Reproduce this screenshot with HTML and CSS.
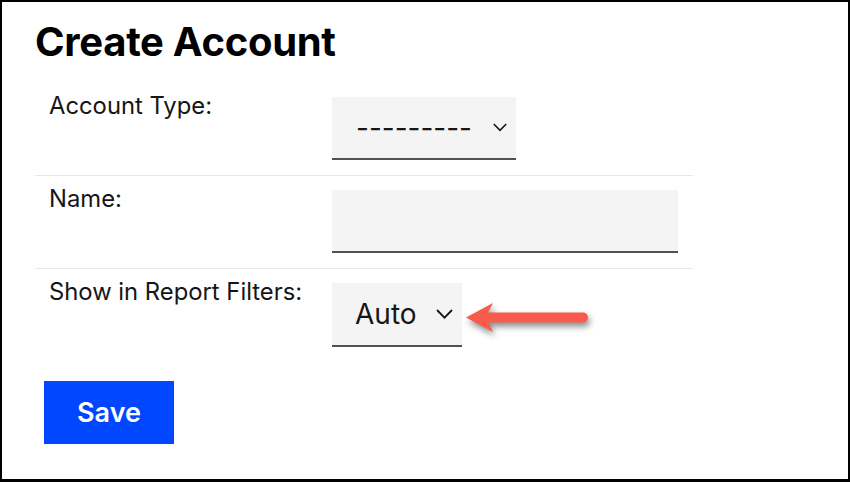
FILE: index.html
```html
<!DOCTYPE html>
<html lang="en">
<head>
<meta charset="utf-8">
<title>Create Account</title>
<link rel="stylesheet" href="styles.css">
</head>
<body>
<div class="frame">
  <h1 class="title">Create Account</h1>
  <div class="form">
    <div class="row row-sep">
      <div class="label">Account Type:</div>
      <div class="field">
        <div class="select select-type">
          <span class="select-text">---------</span>
          <svg class="chev" width="14" height="9" viewBox="0 0 14 9"><path d="M0.8 1 L7 7.4 L13.2 1" fill="none" stroke="#161616" stroke-width="1.6"/></svg>
        </div>
      </div>
    </div>
    <div class="row row-sep">
      <div class="label">Name:</div>
      <div class="field">
        <div class="input-name"></div>
      </div>
    </div>
    <div class="row">
      <div class="label">Show in Report Filters:</div>
      <div class="field">
        <div class="select-wrap">
          <div class="select select-auto">
            <span class="select-text">Auto</span>
            <svg class="chev" width="17" height="10" viewBox="0 0 17 10"><path d="M1 1 L8.5 8.6 L16 1" fill="none" stroke="#161616" stroke-width="1.8"/></svg>
          </div>
          <svg class="arrow" width="135" height="45" viewBox="0 0 135 45">
            <g class="arrow-g">
              <line x1="26" y1="22.5" x2="123" y2="22.5" stroke="#f85a4c" stroke-width="10" stroke-linecap="round"/>
              <polygon points="6,22.5 33,8 28,18 28,27 33,37" fill="#f85a4c"/>
            </g>
          </svg>
        </div>
      </div>
    </div>
  </div>
  <button class="save">Save</button>
</div>
</body>
</html>
```

FILE: styles.css
```css
html, body {
  margin: 0;
  padding: 0;
  background: #fff;
}
.frame {
  box-sizing: border-box;
  width: 850px;
  height: 482px;
  border: 2px solid #000;
  border-bottom-width: 3px;
  padding: 16px 0 0 33px;
  font-family: Inter, "Liberation Sans", sans-serif;
  color: #161616;
}
.title {
  margin: 0;
  font-size: 40px;
  line-height: 48px;
  font-weight: 700;
  color: #000;
  letter-spacing: -0.3px;
}
.form {
  width: 658px;
  margin-top: 17px;
}
.row {
  display: flex;
  padding: 8px 0 15px 14px;
}
.row-sep {
  border-bottom: 1px solid #e8e8e8;
}
.label {
  width: 283px;
  padding-top: 2px;
  font-size: 23.8px;
  line-height: 26px;
}
.field {
  padding-top: 6px;
}
.select {
  box-sizing: border-box;
  height: 63px;
  background: #f4f4f4;
  border-bottom: 2px solid #525252;
  display: flex;
  align-items: center;
  justify-content: space-between;
  padding: 0 9px 0 24px;
  font-size: 28px;
  color: #161616;
}
.select-type {
  width: 184px;
}
.select-auto {
  width: 130px;
  height: 64px;
  padding-left: 23px;
}
.select-text {
  line-height: 1;
}
.chev {
  display: block;
}
.input-name {
  box-sizing: border-box;
  width: 346px;
  height: 63px;
  background: #f4f4f4;
  border-bottom: 2px solid #525252;
}
.select-wrap {
  position: relative;
}
.arrow {
  position: absolute;
  left: 128px;
  top: 12px;
  overflow: visible;
}
.arrow-g {
  filter: drop-shadow(2px 4px 3px rgba(0, 0, 0, 0.45));
}
.save {
  display: block;
  margin: 19px 0 0 9px;
  width: 130px;
  height: 63px;
  border: 0;
  background: #0047ff;
  color: #fff;
  font-family: Inter, "Liberation Sans", sans-serif;
  font-size: 27px;
  font-weight: 600;
  padding: 0;
}
```
